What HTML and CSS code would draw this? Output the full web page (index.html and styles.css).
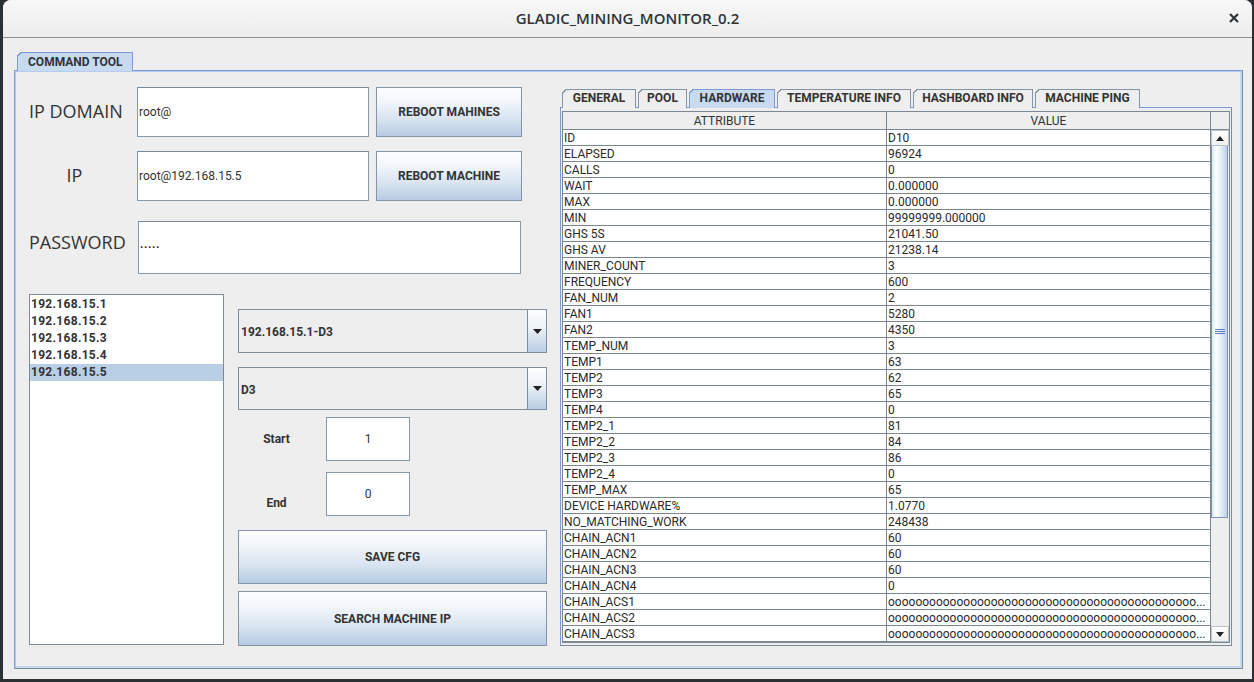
FILE: index.html
```html
<!DOCTYPE html>
<html>
<head>
<meta charset="utf-8">
<link rel="stylesheet" href="styles.css">
</head>
<body>
<div class="window">
  <div class="titlebar">
    <div></div>
    <div class="title">GLADIC_MINING_MONITOR_0.2</div>
    <div class="close"><svg width="10" height="10" viewBox="0 0 10 10"><path d="M1 1L9 9M9 1L1 9" stroke="#2e3436" stroke-width="2.2" fill="none"/></svg></div>
  </div>
  <div class="content">
    <div class="maintab">COMMAND TOOL</div>
    <div class="panel">
      <div class="left">
        <div class="row">
          <div class="lbl">IP DOMAIN</div>
          <div class="field">root@</div>
          <div class="btn rowbtn">REBOOT MAHINES</div>
        </div>
        <div class="row row2">
          <div class="lbl">IP</div>
          <div class="field">root@192.168.15.5</div>
          <div class="btn rowbtn">REBOOT MACHINE</div>
        </div>
        <div class="row row3">
          <div class="lbl lbl-left">PASSWORD</div>
          <div class="field pwd"><span class="dots">.....</span></div>
        </div>
        <div class="bottom">
          <div class="list">
            <div class="item">192.168.15.1</div>
            <div class="item">192.168.15.2</div>
            <div class="item">192.168.15.3</div>
            <div class="item">192.168.15.4</div>
            <div class="item sel">192.168.15.5</div>
          </div>
          <div class="controls">
            <div class="combo c1">
              <div class="combo-text">192.168.15.1-D3</div>
              <div class="combo-arrow"><svg width="9" height="5" viewBox="0 0 9 5"><path d="M0 0H9L4.5 5Z" fill="#222"/></svg></div>
            </div>
            <div class="combo c2">
              <div class="combo-text">D3</div>
              <div class="combo-arrow"><svg width="9" height="5" viewBox="0 0 9 5"><path d="M0 0H9L4.5 5Z" fill="#222"/></svg></div>
            </div>
            <div class="numrow start">
              <div class="numlbl">Start</div>
              <div class="numfield">1</div>
            </div>
            <div class="numrow end">
              <div class="numlbl endlbl">End</div>
              <div class="numfield">0</div>
            </div>
            <div class="btn bigbtn save">SAVE CFG</div>
            <div class="btn bigbtn search">SEARCH MACHINE IP</div>
          </div>
        </div>
      </div>
      <div class="right">
        <div class="tabs">
          <div class="tab t1">GENERAL</div>
          <div class="tab t2">POOL</div>
          <div class="tab t3 active">HARDWARE</div>
          <div class="tab t4">TEMPERATURE INFO</div>
          <div class="tab t5">HASHBOARD INFO</div>
          <div class="tab t6">MACHINE PING</div>
        </div>
        <div class="tabbody">
          <div class="scrollpane">
            <div class="thead">
              <div class="th">ATTRIBUTE</div>
              <div class="th">VALUE</div>
            </div>
            <div class="corner"></div>
            <div class="tbody">
              <div class="tr"><div class="td">ID</div><div class="td">D10</div></div>
              <div class="tr"><div class="td">ELAPSED</div><div class="td">96924</div></div>
              <div class="tr"><div class="td">CALLS</div><div class="td">0</div></div>
              <div class="tr"><div class="td">WAIT</div><div class="td">0.000000</div></div>
              <div class="tr"><div class="td">MAX</div><div class="td">0.000000</div></div>
              <div class="tr"><div class="td">MIN</div><div class="td">99999999.000000</div></div>
              <div class="tr"><div class="td">GHS 5S</div><div class="td">21041.50</div></div>
              <div class="tr"><div class="td">GHS AV</div><div class="td">21238.14</div></div>
              <div class="tr"><div class="td">MINER_COUNT</div><div class="td">3</div></div>
              <div class="tr"><div class="td">FREQUENCY</div><div class="td">600</div></div>
              <div class="tr"><div class="td">FAN_NUM</div><div class="td">2</div></div>
              <div class="tr"><div class="td">FAN1</div><div class="td">5280</div></div>
              <div class="tr"><div class="td">FAN2</div><div class="td">4350</div></div>
              <div class="tr"><div class="td">TEMP_NUM</div><div class="td">3</div></div>
              <div class="tr"><div class="td">TEMP1</div><div class="td">63</div></div>
              <div class="tr"><div class="td">TEMP2</div><div class="td">62</div></div>
              <div class="tr"><div class="td">TEMP3</div><div class="td">65</div></div>
              <div class="tr"><div class="td">TEMP4</div><div class="td">0</div></div>
              <div class="tr"><div class="td">TEMP2_1</div><div class="td">81</div></div>
              <div class="tr"><div class="td">TEMP2_2</div><div class="td">84</div></div>
              <div class="tr"><div class="td">TEMP2_3</div><div class="td">86</div></div>
              <div class="tr"><div class="td">TEMP2_4</div><div class="td">0</div></div>
              <div class="tr"><div class="td">TEMP_MAX</div><div class="td">65</div></div>
              <div class="tr"><div class="td">DEVICE HARDWARE%</div><div class="td">1.0770</div></div>
              <div class="tr"><div class="td">NO_MATCHING_WORK</div><div class="td">248438</div></div>
              <div class="tr"><div class="td">CHAIN_ACN1</div><div class="td">60</div></div>
              <div class="tr"><div class="td">CHAIN_ACN2</div><div class="td">60</div></div>
              <div class="tr"><div class="td">CHAIN_ACN3</div><div class="td">60</div></div>
              <div class="tr"><div class="td">CHAIN_ACN4</div><div class="td">0</div></div>
              <div class="tr"><div class="td">CHAIN_ACS1</div><div class="td">ooooooooooooooooooooooooooooooooooooooooooooo...</div></div>
              <div class="tr"><div class="td">CHAIN_ACS2</div><div class="td">ooooooooooooooooooooooooooooooooooooooooooooo...</div></div>
              <div class="tr"><div class="td">CHAIN_ACS3</div><div class="td">ooooooooooooooooooooooooooooooooooooooooooooo...</div></div>
            </div>
            <div class="vscroll">
              <div class="sb-btn"><svg width="8" height="5" viewBox="0 0 8 5"><path d="M0 5H8L4 0Z" fill="#222"/></svg></div>
              <div class="sb-track">
                <div class="thumb"><div class="grip"></div></div>
              </div>
              <div class="sb-btn"><svg width="8" height="5" viewBox="0 0 8 5"><path d="M0 0H8L4 5Z" fill="#222"/></svg></div>
            </div>
          </div>
        </div>
      </div>
    </div>
  </div>
</div>
</body>
</html>
```
FILE: styles.css
```css
* { box-sizing: border-box; }
html, body { margin: 0; padding: 0; }
body {
  width: 1254px;
  height: 682px;
  overflow: hidden;
  background: #2b3032;
  font-family: Roboto, "Liberation Sans", sans-serif;
  color: #333;
}
.window {
  margin-left: 3px;
  width: 1249px;
  height: 679px;
  border-radius: 8px 8px 0 0;
  overflow: hidden;
  background: #eeeeee;
  display: flex;
  flex-direction: column;
}
.titlebar {
  height: 38px;
  flex: none;
  background: linear-gradient(#f7f7f7, #ededed);
  border-bottom: 1px solid #8e8e8e;
  display: grid;
  grid-template-columns: 1fr auto 1fr;
  align-items: center;
  padding-bottom: 1px;
}
.title {
  font-family: "Open Sans", sans-serif;
  font-weight: 600;
  font-size: 15px;
  color: #2e3436;
}
.close {
  justify-self: end;
  margin-right: 13px;
  display: flex;
}
.content {
  flex: 1;
  padding: 14px 9px 10px 11px;
  display: flex;
  flex-direction: column;
}
.maintab {
  position: relative;
  z-index: 1;
  width: 116px;
  height: 19px;
  margin-left: 3px;
  margin-bottom: -1px;
  background: #c7daf0;
  border: 1px solid #7c9ad6;
  border-bottom: none;
  font-weight: 700;
  font-size: 12px;
  line-height: 18px;
  padding-left: 10px;
  color: #333;
}
.maintab::before,
.tab::before {
  content: "";
  position: absolute;
  left: -1px;
  top: -1px;
  width: 6px;
  height: 6px;
  background: linear-gradient(135deg, #eeeeee 0 2.6px, var(--edge, #8593a6) 2.6px 3.8px, transparent 3.8px);
}
.maintab::before { --edge: #7c9ad6; }
.panel {
  flex: 1;
  display: flex;
  border: 1px solid;
  border-color: #7f9bd3 #7b8a9b #7b8a9b #7f9bd3;
  box-shadow: inset 1px 1px 0 #b8ccef, inset -2px -2px 0 #c8daef;
}
.left {
  width: 545px;
  flex: none;
  padding: 16px 0 0 14px;
}
.row {
  display: flex;
  align-items: center;
  height: 50px;
}
.row2 { margin-top: 14px; }
.row3 { margin-top: 20px; height: 53px; }
.lbl {
  width: 91px;
  margin-right: 17px;
  font-family: "Open Sans", sans-serif;
  font-size: 18px;
  text-align: center;
  white-space: nowrap;
  color: #333;
  padding-bottom: 2px;
}
.lbl-left { text-align: left; width: 109px; margin-right: 0; padding-bottom: 12px; }
.field {
  width: 232px;
  height: 50px;
  background: #fff;
  border: 1px solid #8a97a5;
  border-top-color: #7a8795;
  display: flex;
  align-items: center;
  padding-left: 1px;
  font-size: 12px;
  color: #333;
}
.pwd {
  width: 383px;
  height: 53px;
  font-weight: 700;
  letter-spacing: 0.5px;
}
.dots { padding-bottom: 8px; }
.btn {
  border: 1px solid #8495aa;
  background: linear-gradient(#fdfeff 0%, #f1f5fa 30%, #d8e4f0 65%, #b6cbe3 100%);
  display: flex;
  align-items: center;
  justify-content: center;
  font-weight: 700;
  font-size: 12px;
  color: #333;
}
.rowbtn {
  margin-left: 7px;
  width: 146px;
  height: 50px;
}
.bottom {
  display: flex;
  margin-top: 20px;
}
.list {
  width: 195px;
  height: 351px;
  background: #fff;
  border: 1px solid #7d8a98;
  padding-top: 1px;
}
.item {
  height: 17px;
  line-height: 17px;
  padding-left: 1px;
  font-weight: 700;
  font-size: 12px;
  letter-spacing: 0.3px;
  color: #333;
}
.item.sel { background: #b8cfe5; }
.controls {
  margin-left: 14px;
  width: 309px;
  padding-top: 15px;
  display: flex;
  flex-direction: column;
}
.combo {
  height: 44px;
  display: flex;
  border: 1px solid #7f8e9e;
  background: #eeeeee;
}
.c2 { margin-top: 14px; height: 43px; }
.combo-text {
  flex: 1;
  display: flex;
  align-items: center;
  padding-left: 2px;
  padding-top: 2px;
  font-weight: 700;
  font-size: 12px;
  color: #333;
}
.combo-arrow {
  width: 19px;
  border-left: 1px solid #7f8e9e;
  background: linear-gradient(#fdfeff 0%, #eef3f9 40%, #b9cde4 100%);
  display: flex;
  align-items: center;
  justify-content: center;
}
.numrow {
  display: flex;
  align-items: center;
  height: 44px;
}
.start { margin-top: 7px; }
.end { margin-top: 11px; }
.numlbl {
  width: 77px;
  margin-right: 11px;
  text-align: center;
  font-weight: 700;
  font-size: 12px;
  color: #333;
}
.endlbl { align-self: flex-end; margin-bottom: 6px; }
.numfield {
  width: 84px;
  height: 44px;
  background: #fff;
  border: 1px solid #8a97a5;
  display: flex;
  align-items: center;
  justify-content: center;
  font-size: 12px;
  color: #333;
}
.bigbtn { width: 309px; }
.save { margin-top: 14px; height: 54px; }
.search { margin-top: 7px; height: 55px; }

.right {
  width: 672px;
  flex: none;
  margin-top: 18px;
  display: flex;
  flex-direction: column;
}
.tabs {
  display: flex;
  height: 18px;
  padding-left: 2px;
  gap: 2px;
  position: relative;
  z-index: 1;
}
.tab {
  position: relative;
  height: 19px;
  border: 1px solid #8593a6;
  border-bottom: none;
  background: #eeeeee;
  text-align: center;
  font-weight: 700;
  font-size: 12px;
  line-height: 17px;
  color: #333;
}
.tab.active {
  background: #c7daf0;
  border-color: #7c9ad6;
  --edge: #7c9ad6;
}
.t1 { width: 74px; }
.t2 { width: 49px; }
.t3 { width: 86px; }
.t4 { width: 134px; }
.t5 { width: 120px; }
.t6 { width: 105px; }
.tabbody {
  height: 539px;
  border: 1px solid;
  border-color: #7f9bd3 #7b8a9b #7b8a9b #7f9bd3;
  padding: 3px 1px 2px 1px;
}
.scrollpane {
  height: 532px;
  border: 1px solid #7a8794;
  display: grid;
  grid-template-columns: 648px 18px;
  grid-template-rows: 18px 512px;
  background: #fff;
}
.thead {
  display: flex;
  background: #eeeeee;
  border-bottom: 1px solid #7c8691;
}
.th {
  width: 324px;
  border-right: 1px solid #7c8691;
  text-align: center;
  font-size: 12px;
  line-height: 18px;
  color: #333;
}
.corner {
  background: #eeeeee;
  border-bottom: 1px solid #7c8691;
}
.tbody { display: flex; flex-direction: column; }
.tr { display: flex; height: 16px; }
.td {
  width: 324px;
  height: 16px;
  border-right: 1px solid #7c8691;
  border-bottom: 1px solid #7c8691;
  padding-left: 1px;
  font-size: 12px;
  line-height: 16px;
  color: #2a2a2a;
  white-space: nowrap;
  overflow: hidden;
}
.vscroll {
  display: flex;
  flex-direction: column;
  background: #eeeeee;
}
.sb-btn {
  height: 16px;
  flex: none;
  border: 1px solid #b9c3ce;
  background: linear-gradient(#ffffff, #eeeeee);
  display: flex;
  align-items: center;
  justify-content: center;
}
.sb-track {
  flex: 1;
  padding-right: 1px;
}
.thumb {
  height: 372px;
  border-left: 1px solid #6f90d4;
  border-right: 1px solid #7f93ae;
  border-bottom: 1px solid #7f93ae;
  background: linear-gradient(90deg, #dbe6f4 0%, #ffffff 25%, #e4edf7 60%, #bcd0e8 100%);
  display: flex;
  align-items: center;
  justify-content: center;
}
.grip {
  width: 10px;
  height: 5px;
  background: repeating-linear-gradient(#5b7fc8 0 1px, transparent 1px 2px);
}
```
